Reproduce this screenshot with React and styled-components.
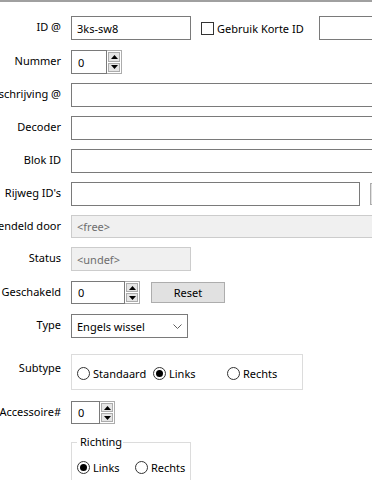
import React from "react";
import styled, { createGlobalStyle } from "styled-components";

const Spinner = ({ value, width, height }) => (
  <SpinBox $h={height}>
    <SpinInput $w={width}>{value}</SpinInput>
    <SpinButtons>
      <SpinButton>
        <svg width="7" height="4" viewBox="0 0 7 4">
          <polygon points="0,4 7,4 3.5,0" fill="#000" />
        </svg>
      </SpinButton>
      <SpinButton>
        <svg width="7" height="4" viewBox="0 0 7 4">
          <polygon points="0,0 7,0 3.5,4" fill="#000" />
        </svg>
      </SpinButton>
    </SpinButtons>
  </SpinBox>
);

const Radio = ({ label, checked, width }) => (
  <RadioOption $w={width}>
    <RadioCircle $checked={checked} />
    <span>{label}</span>
  </RadioOption>
);

const App = () => {
  return (
    <>
      <GlobalStyle />
      <Page>
        <Row>
          <Label>ID @</Label>
          <Cell>
            <TextField $w={120}>3ks-sw8</TextField>
            <CheckOption>
              <CheckBox />
              <span>Gebruik Korte ID</span>
            </CheckOption>
            <TextField $w={80} style={{ marginLeft: 15 }} />
          </Cell>
        </Row>

        <Row $mt={10}>
          <Label>Nummer</Label>
          <Cell>
            <Spinner value="0" width={36} height={24} />
          </Cell>
        </Row>

        <Row $mt={9}>
          <Label>Beschrijving @</Label>
          <Cell>
            <TextField $w={400} />
          </Cell>
        </Row>

        <Row $mt={9}>
          <Label>Decoder</Label>
          <Cell>
            <TextField $w={400} />
          </Cell>
        </Row>

        <Row $mt={9}>
          <Label>Blok ID</Label>
          <Cell>
            <TextField $w={400} />
          </Cell>
        </Row>

        <Row $mt={9}>
          <Label>Rijweg ID's</Label>
          <Cell>
            <TextField $w={289} />
            <PushButton $w={75} $h={22} style={{ marginLeft: 10 }} />
          </Cell>
        </Row>

        <Row $mt={9} $h={23}>
          <Label>Vergrendeld door</Label>
          <Cell>
            <TextField $w={400} $h={23} $disabled>
              &lt;free&gt;
            </TextField>
          </Cell>
        </Row>

        <Row $mt={9}>
          <Label>Status</Label>
          <Cell>
            <TextField $w={120} $disabled>
              &lt;undef&gt;
            </TextField>
          </Cell>
        </Row>

        <Row $mt={10} $h={23}>
          <Label>Geschakeld</Label>
          <Cell>
            <Spinner value="0" width={54} height={23} />
            <PushButton $w={74} $h={21} style={{ marginLeft: 11 }}>
              Reset
            </PushButton>
          </Cell>
        </Row>

        <Row $mt={10}>
          <Label>Type</Label>
          <Cell>
            <Select>
              <span>Engels wissel</span>
              <svg width="9" height="5" viewBox="0 0 9 5">
                <polyline
                  points="0.5,0.5 4.5,4.5 8.5,0.5"
                  fill="none"
                  stroke="#606060"
                  strokeWidth="1"
                />
              </svg>
            </Select>
          </Cell>
        </Row>

        <Row $mt={16} $h={36}>
          <Label $raise={4}>Subtype</Label>
          <Cell>
            <Group>
              <Radio label="Standaard" width={76} />
              <Radio label="Links" width={74} checked />
              <Radio label="Rechts" />
            </Group>
          </Cell>
        </Row>

        <Row $mt={11} $h={23}>
          <Label>Accessoire#</Label>
          <Cell>
            <Spinner value="0" width={29} height={23} />
          </Cell>
        </Row>

        <Row $mt={10} $h={60} $top>
          <span />
          <Fieldset>
            <Legend>Richting</Legend>
            <RadioRow>
              <Radio label="Links" width={58} checked />
              <Radio label="Rechts" />
            </RadioRow>
          </Fieldset>
        </Row>
      </Page>
    </>
  );
};

export default App;

const GlobalStyle = createGlobalStyle`
  html, body {
    margin: 0;
    padding: 0;
    background: #ffffff;
  }
  body {
    font-family: "Noto Sans", "Open Sans", sans-serif;
    font-size: 11px;
    color: #000000;
    overflow: hidden;
  }
`;

const Page = styled.div`
  width: 372px;
  height: 480px;
  box-sizing: border-box;
  border-top: 2px solid #a0a0a0;
  padding-top: 14px;
  display: flex;
  flex-direction: column;
  overflow: hidden;
`;

const Row = styled.div`
  display: grid;
  grid-template-columns: 61px 1fr;
  column-gap: 10px;
  align-items: ${(p) => (p.$top ? "start" : "center")};
  height: ${(p) => p.$h || 24}px;
  margin-top: ${(p) => p.$mt || 0}px;
  flex-shrink: 0;
`;

const Label = styled.div`
  display: flex;
  justify-content: flex-end;
  white-space: nowrap;
  line-height: 16px;
  margin-bottom: ${(p) => (p.$raise || 1) * 2}px;
`;

const Cell = styled.div`
  display: flex;
  align-items: center;
  min-width: 0;
`;

const TextField = styled.div`
  width: ${(p) => p.$w}px;
  height: ${(p) => p.$h || 24}px;
  flex-shrink: 0;
  box-sizing: border-box;
  border: 1px solid ${(p) => (p.$disabled ? "#cccccc" : "#7a7a7a")};
  background: ${(p) => (p.$disabled ? "#f0f0f0" : "#ffffff")};
  color: ${(p) => (p.$disabled ? "#6d6d6d" : "#000000")};
  padding: 0 5px;
  display: flex;
  align-items: center;
  white-space: nowrap;
`;

const CheckOption = styled.div`
  display: flex;
  align-items: center;
  gap: 3px;
  margin-left: 10px;
  white-space: nowrap;
`;

const CheckBox = styled.span`
  width: 13px;
  height: 13px;
  box-sizing: border-box;
  border: 1px solid #333333;
  background: #ffffff;
`;

const SpinBox = styled.div`
  display: flex;
  height: ${(p) => p.$h}px;
  flex-shrink: 0;
`;

const SpinInput = styled.div`
  width: ${(p) => p.$w}px;
  height: 100%;
  box-sizing: border-box;
  border: 1px solid #7a7a7a;
  padding: 0 6px;
  display: flex;
  align-items: center;
`;

const SpinButtons = styled.div`
  width: 15px;
  height: 100%;
  box-sizing: border-box;
  border: 1px solid #acacac;
  border-left: none;
  display: flex;
  flex-direction: column;
  gap: 1px;
  background: #ffffff;
  padding: 1px;
`;

const SpinButton = styled.div`
  flex: 1;
  background: #e5e5e5;
  border: 1px solid #acacac;
  display: flex;
  align-items: center;
  justify-content: center;
`;

const PushButton = styled.div`
  width: ${(p) => p.$w}px;
  height: ${(p) => p.$h}px;
  flex-shrink: 0;
  box-sizing: border-box;
  background: #e1e1e1;
  border: 1px solid #adadad;
  display: flex;
  align-items: center;
  justify-content: center;
`;

const Select = styled.div`
  width: 117px;
  height: 24px;
  box-sizing: border-box;
  border: 1px solid #7a7a7a;
  padding: 0 5px 0 5px;
  display: flex;
  align-items: center;
  justify-content: space-between;
  white-space: nowrap;
`;

const Group = styled.div`
  width: 232px;
  height: 36px;
  box-sizing: border-box;
  border: 1px solid #dcdcdc;
  padding: 3px 0 0 5px;
  display: flex;
  align-items: center;
`;

const RadioOption = styled.div`
  display: flex;
  align-items: center;
  gap: 3px;
  width: ${(p) => (p.$w ? `${p.$w}px` : "auto")};
  flex-shrink: 0;
  white-space: nowrap;
`;

const RadioCircle = styled.span`
  width: 13px;
  height: 13px;
  box-sizing: border-box;
  border: 1px solid #333333;
  border-radius: 50%;
  background: #ffffff;
  display: flex;
  align-items: center;
  justify-content: center;

  &::after {
    content: "";
    width: 7px;
    height: 7px;
    border-radius: 50%;
    background: #000000;
    display: ${(p) => (p.$checked ? "block" : "none")};
  }
`;

const Fieldset = styled.fieldset`
  margin: 0;
  padding: 0 0 0 5px;
  min-width: 0;
  width: 120px;
  height: 70px;
  box-sizing: border-box;
  border: 1px solid #dcdcdc;
`;

const Legend = styled.legend`
  padding: 0 1px 0 3px;
  line-height: 16px;
`;

const RadioRow = styled.div`
  display: flex;
  align-items: center;
  height: 20px;
  margin-top: 7px;
`;
